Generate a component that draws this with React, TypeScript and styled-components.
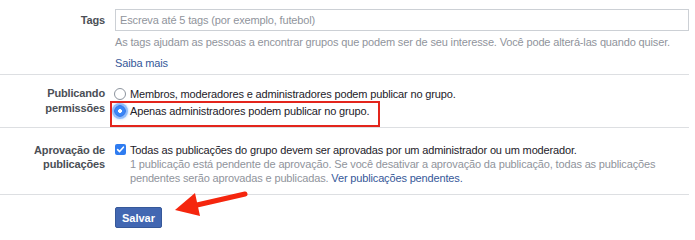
import React from 'react'
import styled, { createGlobalStyle } from 'styled-components'

const GlobalStyle = createGlobalStyle`
  body {
    margin: 0;
    background: #fff;
    font-family: "Liberation Sans", Arial, sans-serif;
    font-size: 11px;
    letter-spacing: -0.15px;
    color: #1d2129;
  }
`

const Page = styled.div`
  width: 689px;
  height: 239px;
  overflow: hidden;
`

const Section = styled.div<{ $top: number; $bottom: number; $last?: boolean }>`
  display: grid;
  grid-template-columns: 105px 1fr;
  column-gap: 10px;
  padding: ${p => p.$top}px 0 ${p => p.$bottom}px;
  border-bottom: ${p => (p.$last ? 'none' : '1px solid #dddfe2')};
  position: relative;
`

const Label = styled.div<{ $lh: number; $shift?: number }>`
  text-align: right;
  font-weight: bold;
  color: #4b4f56;
  line-height: ${p => p.$lh}px;
  padding-top: ${p => p.$shift ?? 0}px;
`

const Content = styled.div`
  display: flex;
  flex-direction: column;
`

const TagInput = styled.input`
  box-sizing: border-box;
  width: 100%;
  height: 22px;
  margin: 0;
  padding: 0 4px;
  border: 1px solid #ccd0d5;
  font-family: inherit;
  font-size: 11px;
  letter-spacing: -0.15px;
  outline: none;
  &::placeholder {
    color: #90949c;
  }
`

const Help = styled.div<{ $top?: number }>`
  color: #90949c;
  line-height: 16px;
  margin-top: ${p => p.$top ?? 0}px;
`

const Link = styled.a`
  color: #365899;
  text-decoration: none;
  cursor: pointer;
`

const Option = styled.label<{ $marked?: boolean }>`
  display: flex;
  align-items: center;
  gap: 4px;
  height: 17px;
  position: relative;
  ${p =>
    p.$marked &&
    `
    &::after {
      content: '';
      position: absolute;
      left: -5px;
      top: -1px;
      width: 270px;
      height: 26px;
      box-sizing: border-box;
      border: 2px solid #e3251c;
      pointer-events: none;
    }
  `}
`

const Radio = styled.span<{ $on?: boolean }>`
  box-sizing: border-box;
  width: 12px;
  height: 12px;
  border-radius: 50%;
  flex: none;
  margin-left: -1px;
  ${p =>
    p.$on
      ? `
    background: radial-gradient(circle, #fff 0 1.6px, #3b86f7 2.2px);
    border: 1px solid #2f74e6;
    box-shadow: 0 0 0 2px rgba(96, 160, 250, 0.6), 0 0 2px 3px rgba(120, 175, 250, 0.3);
  `
      : `
    background: #fff;
    border: 1px solid #8d949e;
  `}
`

const CheckRow = styled.div`
  display: grid;
  grid-template-columns: 11px 1fr;
  column-gap: 4px;
  line-height: 14px;
`

const CheckBox = styled.span`
  width: 11px;
  height: 11px;
  margin-top: 1px;
  border-radius: 2px;
  background: #2f7cf0;
  display: flex;
  align-items: center;
  justify-content: center;
`

const Desc = styled.div`
  grid-column: 2;
  color: #90949c;
`

const SaveButton = styled.button`
  box-sizing: border-box;
  width: 47px;
  height: 21px;
  padding: 0;
  border: 1px solid #365899;
  border-radius: 2px;
  background: #4267b2;
  color: #fff;
  font-family: inherit;
  font-size: 11px;
  font-weight: bold;
  cursor: pointer;
`

const Arrow = styled.svg`
  position: absolute;
  left: 170px;
  top: -6px;
  pointer-events: none;
`

export default function App() {
  return (
    <Page>
      <GlobalStyle />
      <Section $top={9} $bottom={3}>
        <Label $lh={22}>Tags</Label>
        <Content>
          <TagInput placeholder="Escreva até 5 tags (por exemplo, futebol)" />
          <Help $top={3}>
            As tags ajudam as pessoas a encontrar grupos que podem ser de seu interesse. Você pode alterá-las quando quiser.
          </Help>
          <Help $top={5}>
            <Link>Saiba mais</Link>
          </Help>
        </Content>
      </Section>

      <Section $top={10} $bottom={8}>
        <Label $lh={15} $shift={1}>
          Publicando
          <br />
          permissões
        </Label>
        <Content>
          <Option>
            <Radio />
            Membros, moderadores e administradores podem publicar no grupo.
          </Option>
          <Option $marked>
            <Radio $on />
            Apenas administradores podem publicar no grupo.
          </Option>
        </Content>
      </Section>

      <Section $top={15} $bottom={9}>
        <Label $lh={14}>
          Aprovação de
          <br />
          publicações
        </Label>
        <CheckRow>
          <CheckBox>
            <svg width="9" height="9" viewBox="0 0 9 9">
              <path d="M1.6 4.6 L3.6 6.6 L7.4 2.2" fill="none" stroke="#fff" strokeWidth="1.6" strokeLinecap="round" strokeLinejoin="round" />
            </svg>
          </CheckBox>
          <span>Todas as publicações do grupo devem ser aprovadas por um administrador ou um moderador.</span>
          <Desc>
            1 publicação está pendente de aprovação. Se você desativar a aprovação da publicação, todas as publicações
            <br />
            pendentes serão aprovadas e publicadas. <Link>Ver publicações pendentes.</Link>
          </Desc>
        </CheckRow>
      </Section>

      <Section $top={12} $bottom={10} $last>
        <div />
        <div>
          <SaveButton>Salvar</SaveButton>
        </div>
        <Arrow width="80" height="34" viewBox="0 0 80 34">
          <path d="M75 5 L27 16" stroke="#f5260e" strokeWidth="5" strokeLinecap="round" />
          <path d="M5 21 L25 4 L30 27 Z" fill="#f5260e" />
        </Arrow>
      </Section>
    </Page>
  )
}
